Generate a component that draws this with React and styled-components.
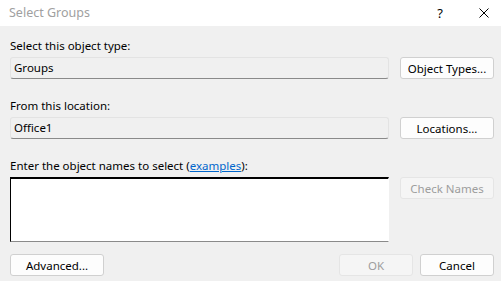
import styled, { createGlobalStyle } from 'styled-components';

const GlobalStyle = createGlobalStyle`
  html, body {
    margin: 0;
    padding: 0;
    background: #f0f0f0;
  }
  body {
    font-family: "Noto Sans", "Open Sans", sans-serif;
    font-size: 11.5px;
    color: #000;
  }
`;

function App() {
  return (
    <>
      <GlobalStyle />
      <Dialog>
        <TitleBar>
          <Title>Select Groups</Title>
          <TitleButtons>
            <HelpGlyph>?</HelpGlyph>
            <CloseGlyph>
              <svg width='10' height='10' viewBox='0 0 10 10'>
                <path d='M0.5 0.5 L9.5 9.5 M9.5 0.5 L0.5 9.5' stroke='#000' strokeWidth='1' />
              </svg>
            </CloseGlyph>
          </TitleButtons>
        </TitleBar>
        <Body>
          <Label>Select this object type:</Label>
          <Row>
            <Field>Groups</Field>
            <Button>Object Types...</Button>
          </Row>
          <Label>From this location:</Label>
          <Row>
            <Field>Office1</Field>
            <Button>Locations...</Button>
          </Row>
          <Label>
            Enter the object names to select (<Link href='#'>examples</Link>):
          </Label>
          <Row $top>
            <NamesBox />
            <Button disabled>Check Names</Button>
          </Row>
          <Footer>
            <Button>Advanced...</Button>
            <FooterRight>
              <Button $small disabled>
                OK
              </Button>
              <Button $small>Cancel</Button>
            </FooterRight>
          </Footer>
        </Body>
      </Dialog>
    </>
  );
}

export default App;

const Dialog = styled.div`
  width: 501px;
  height: 281px;
  background: #f0f0f0;
  overflow: hidden;
`;

const TitleBar = styled.div`
  height: 26px;
  background: #fff;
  display: flex;
  align-items: center;
  justify-content: space-between;
  padding: 0 12px 0 9px;
`;

const Title = styled.div`
  font-size: 12.5px;
  color: #a0a0a0;
  line-height: 26px;
`;

const TitleButtons = styled.div`
  display: flex;
  align-items: center;
  gap: 36px;
`;

const HelpGlyph = styled.span`
  font-size: 13px;
  line-height: 26px;
`;

const CloseGlyph = styled.span`
  display: flex;
  svg {
    display: block;
  }
`;

const Body = styled.div`
  padding: 12px 7px 0 10px;
`;

const Label = styled.div`
  line-height: 16px;
  margin-bottom: 3px;
`;

const Link = styled.a`
  color: #0066cc;
  text-decoration: underline;
`;

const Row = styled.div`
  display: flex;
  align-items: flex-start;
  gap: 11px;
  margin-bottom: ${(p) => (p.$top ? '12px' : '19px')};
`;

const Field = styled.div`
  flex: 1;
  height: 22px;
  box-sizing: border-box;
  padding: 0 3px;
  line-height: 20px;
  border: 1px solid #e3e3e3;
  border-bottom-color: #8a8a8a;
  border-radius: 3px;
  background: #f0f0f0;
`;

const NamesBox = styled.div`
  flex: 1;
  height: 65px;
  box-sizing: border-box;
  background: #fff;
  border-top: 2px solid #000;
  border-left: 1px solid #000;
  border-right: 1px solid #fff;
  border-bottom: 1px solid #8a8a8a;
`;

const Button = styled.button`
  width: ${(p) => (p.$small ? '74px' : '94px')};
  height: 22px;
  box-sizing: border-box;
  padding: 0;
  font-family: inherit;
  font-size: 11.5px;
  color: #000;
  background: #fdfdfd;
  border: 1px solid #d0d0d0;
  border-radius: 3px;
  flex-shrink: 0;

  &:disabled {
    color: #9d9d9d;
    background: #f5f5f5;
    border-color: #e5e5e5;
  }
`;

const Footer = styled.div`
  display: flex;
  justify-content: space-between;
`;

const FooterRight = styled.div`
  display: flex;
  gap: 7px;
`;
